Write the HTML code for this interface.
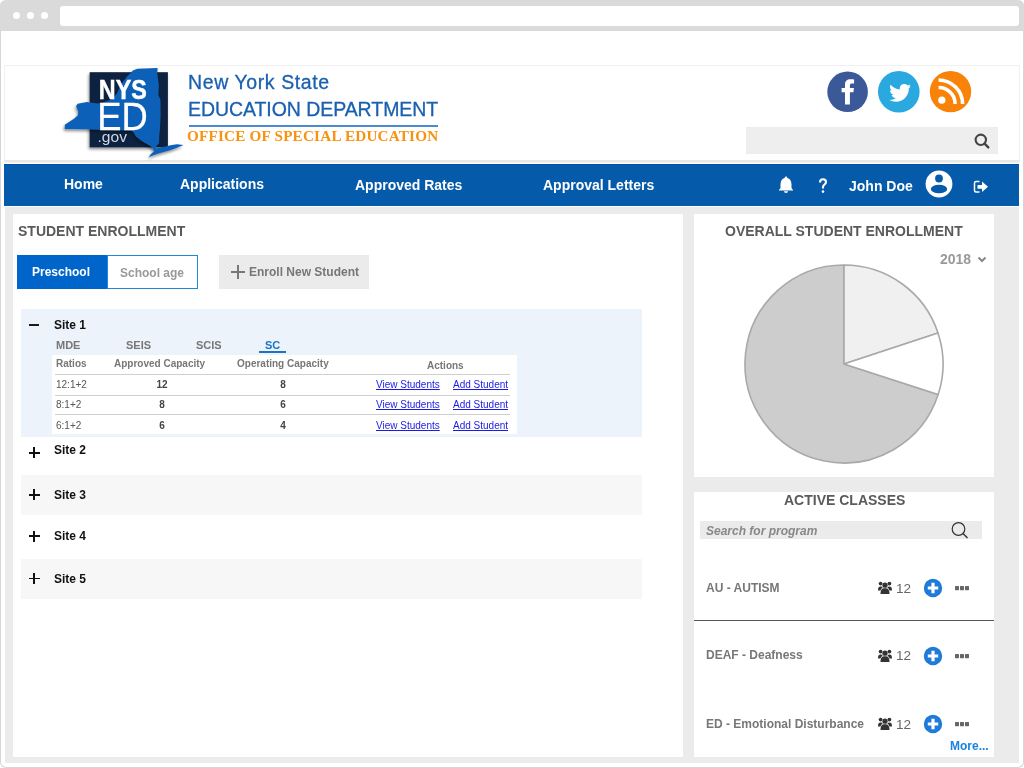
<!DOCTYPE html>
<html><head><meta charset="utf-8">
<style>
*{margin:0;padding:0;box-sizing:border-box}
html,body{width:1024px;height:768px;overflow:hidden;background:#fff;font-family:"Liberation Sans",sans-serif}
.t{will-change:transform}
.a{position:absolute}
.t{position:absolute;white-space:nowrap;line-height:1}
.b{font-weight:bold}
</style></head><body>
<!-- browser frame -->
<div class="a" style="left:0;top:0;width:1024px;height:768px;border:1px solid #d6d6d6;border-top:none;border-radius:6px"></div>
<div class="a" style="left:0;top:0;width:1024px;height:31px;background:#dadada;border-radius:6px 6px 0 0"></div>
<div class="a" style="left:12.5px;top:11.8px;width:7.6px;height:7.6px;border-radius:50%;background:#fff"></div>
<div class="a" style="left:26.6px;top:11.8px;width:7.6px;height:7.6px;border-radius:50%;background:#fff"></div>
<div class="a" style="left:40.7px;top:11.8px;width:7.6px;height:7.6px;border-radius:50%;background:#fff"></div>
<div class="a" style="left:59.5px;top:5.5px;width:959.5px;height:20px;border-radius:3px;background:#fff"></div>

<!-- header box -->
<div class="a" style="left:4px;top:65px;width:1016px;height:97px;border:1px solid #f0f0f0;border-bottom:2px solid #e6e6e6"></div>

<div class="a" style="left:4px;top:162px;width:1016px;height:1px;background:#f3f3f3"></div>
<!-- nav -->
<div class="a" style="left:4px;top:164px;width:1015px;height:42px;background:#065aaa;border-top:1px solid #0050a5"></div>
<div class="t b" style="left:64px;top:177px;font-size:14px;color:#fff">Home</div>
<div class="t b" style="left:180px;top:177px;font-size:14px;color:#fff">Applications</div>
<div class="t b" style="left:355px;top:178px;font-size:14px;color:#fff">Approved Rates</div>
<div class="t b" style="left:543px;top:178px;font-size:14px;color:#fff">Approval Letters</div>
<div class="t b" style="left:849px;top:179px;font-size:14px;color:#fff">John Doe</div>

<!-- gray content -->
<div class="a" style="left:5px;top:207px;width:1014px;height:556px;background:#ebebeb"></div>
<div class="a" style="left:13px;top:214px;width:670px;height:543px;background:#fff"></div>
<div class="a" style="left:694px;top:214px;width:300px;height:263px;background:#fff"></div>
<div class="a" style="left:694px;top:492px;width:300px;height:265px;background:#fff"></div>

<!-- left panel -->
<div class="t b" style="left:18px;top:224px;font-size:14px;color:#5a5a5a">STUDENT ENROLLMENT</div>


<div class="a" style="left:17px;top:255px;width:90px;height:34px;background:#0065cb"></div>
<div class="a" style="left:107px;top:255px;width:91px;height:34px;border:1px solid #2288d2;background:#fff"></div>
<div class="t b" style="left:31.5px;top:266px;font-size:12px;color:#fff">Preschool</div>
<div class="t b" style="left:119.5px;top:266.7px;font-size:12px;color:#999">School age</div>
<div class="a" style="left:219px;top:255px;width:150px;height:34px;background:#ebebeb"></div>
<div class="a" style="left:231px;top:271px;width:14px;height:2px;background:#777"></div>
<div class="a" style="left:237px;top:265px;width:2px;height:14px;background:#777"></div>
<div class="t b" style="left:249px;top:266px;font-size:12px;color:#777">Enroll New Student</div>

<!-- site 1 -->
<div class="a" style="left:21px;top:309px;width:621px;height:128px;background:#ecf3fb"></div>
<div class="a" style="left:29px;top:324.2px;width:10px;height:2.3px;background:#1a1a1a"></div>
<div class="t b" style="left:54px;top:319px;font-size:12px;color:#111">Site 1</div>
<div class="t b" style="left:56px;top:339.5px;font-size:11px;color:#777">MDE</div>
<div class="t b" style="left:126px;top:339.5px;font-size:11px;color:#777">SEIS</div>
<div class="t b" style="left:195.5px;top:339.5px;font-size:11px;color:#777">SCIS</div>
<div class="t b" style="left:265px;top:339.5px;font-size:11px;color:#1a73c8">SC</div>
<div class="a" style="left:259px;top:351px;width:27px;height:2px;background:#1a73c8"></div>
<div class="a" style="left:52px;top:355px;width:465px;height:79px;background:#fff"></div>
<div class="t b" style="left:56px;top:359px;font-size:10px;color:#777">Ratios</div>
<div class="t b" style="left:114px;top:359px;font-size:10px;color:#777">Approved Capacity</div>
<div class="t b" style="left:237px;top:359px;font-size:10px;color:#777">Operating Capacity</div>
<div class="t b" style="left:427px;top:360.5px;font-size:10px;color:#777">Actions</div>
<div class="a" style="left:55px;top:374px;width:455px;height:1px;background:#cfcfcf"></div>
<div class="a" style="left:55px;top:395px;width:455px;height:1px;background:#cfcfcf"></div>
<div class="a" style="left:55px;top:414px;width:455px;height:1px;background:#cfcfcf"></div>
<div class="t" style="left:56px;top:379.535px;font-size:10px;color:#555">12:1+2</div>
<div class="t b" style="left:112px;width:100px;text-align:center;top:379.535px;font-size:10px;color:#444">12</div>
<div class="t b" style="left:233px;width:100px;text-align:center;top:379.535px;font-size:10px;color:#444">8</div>
<div class="t" style="left:376px;top:379.535px;font-size:10px;color:#1a1ae6;text-decoration:underline">View Students</div>
<div class="t" style="left:453px;top:379.535px;font-size:10px;color:#1a1ae6;text-decoration:underline">Add Student</div>
<div class="t" style="left:56px;top:399.535px;font-size:10px;color:#555">8:1+2</div>
<div class="t b" style="left:112px;width:100px;text-align:center;top:399.535px;font-size:10px;color:#444">8</div>
<div class="t b" style="left:233px;width:100px;text-align:center;top:399.535px;font-size:10px;color:#444">6</div>
<div class="t" style="left:376px;top:399.535px;font-size:10px;color:#1a1ae6;text-decoration:underline">View Students</div>
<div class="t" style="left:453px;top:399.535px;font-size:10px;color:#1a1ae6;text-decoration:underline">Add Student</div>
<div class="t" style="left:56px;top:420.8px;font-size:10px;color:#555">6:1+2</div>
<div class="t b" style="left:112px;width:100px;text-align:center;top:420.8px;font-size:10px;color:#444">6</div>
<div class="t b" style="left:233px;width:100px;text-align:center;top:420.8px;font-size:10px;color:#444">4</div>
<div class="t" style="left:376px;top:420.8px;font-size:10px;color:#1a1ae6;text-decoration:underline">View Students</div>
<div class="t" style="left:453px;top:420.8px;font-size:10px;color:#1a1ae6;text-decoration:underline">Add Student</div>

<div class="a" style="left:21px;top:475px;width:621px;height:40px;background:#f7f7f7"></div>
<div class="a" style="left:21px;top:559px;width:621px;height:40px;background:#f7f7f7"></div>
<div class="t b" style="left:54px;top:443.942px;font-size:12px;color:#111">Site 2</div>
<div class="a" style="left:28.5px;top:452.05px;width:11px;height:1.5px;background:#111"></div>
<div class="a" style="left:33.25px;top:447.3px;width:1.5px;height:11px;background:#111"></div>
<div class="t b" style="left:54px;top:488.942px;font-size:12px;color:#111">Site 3</div>
<div class="a" style="left:28.5px;top:494.05px;width:11px;height:1.5px;background:#111"></div>
<div class="a" style="left:33.25px;top:489.3px;width:1.5px;height:11px;background:#111"></div>
<div class="t b" style="left:54px;top:529.942px;font-size:12px;color:#111">Site 4</div>
<div class="a" style="left:28.5px;top:535.45px;width:11px;height:1.5px;background:#111"></div>
<div class="a" style="left:33.25px;top:530.7px;width:1.5px;height:11px;background:#111"></div>
<div class="t b" style="left:54px;top:572.842px;font-size:12px;color:#111">Site 5</div>
<div class="a" style="left:28.5px;top:577.75px;width:11px;height:1.5px;background:#111"></div>
<div class="a" style="left:33.25px;top:573.0px;width:1.5px;height:11px;background:#111"></div>

<div class="t b" style="left:725px;top:224px;font-size:14px;color:#5a5a5a">OVERALL STUDENT ENROLLMENT</div>
<div class="t b" style="left:939.5px;top:252px;font-size:14px;color:#999">2018</div>
<svg class="a" style="left:975px;top:253.5px" width="14" height="10" viewBox="0 0 14 10"><path d="M3.5 3.5 L7 7 L10.5 3.5" fill="none" stroke="#888" stroke-width="2"/></svg>
<svg class="a" style="left:694px;top:214px" width="300" height="263" viewBox="694 214 300 263">
<g stroke="#aaa9a5" stroke-width="1.6" stroke-linejoin="round">
<path d="M844 364 L938.15 394.59 A99 99 0 1 1 844.00 265.00 Z" fill="#cdcdcd"/><path d="M844 364 L844.00 265.00 A99 99 0 0 1 937.99 332.91 Z" fill="#f0f0f0"/><path d="M844 364 L937.99 332.91 A99 99 0 0 1 938.15 394.59 Z" fill="#ffffff"/>
</g></svg>

<div class="t b" style="left:783.5px;top:492.8px;font-size:14px;color:#5a5a5a">ACTIVE CLASSES</div>
<div class="a" style="left:700px;top:521px;width:282px;height:18px;background:#ebebeb"></div>
<div class="t b" style="left:706px;top:524.7px;font-size:12px;font-style:italic;color:#888">Search for program</div>
<svg class="a" style="left:948px;top:519px" width="24" height="22" viewBox="0 0 24 22"><circle cx="10.5" cy="10" r="6.3" fill="none" stroke="#333" stroke-width="1.2"/><path d="M15 14.5 L19.5 19" stroke="#333" stroke-width="1.4"/></svg>
<div class="a" style="left:694px;top:620px;width:300px;height:1px;background:#555"></div>
<div class="t b" style="left:950px;top:739.7px;font-size:12px;color:#1a82e2">More...</div>
<div class="t b" style="left:706px;top:582.34px;font-size:12px;color:#777">AU - AUTISM</div>
<div class="t" style="left:895.5px;top:581.98px;font-size:13.5px;color:#666">12</div>
<svg class="a" style="left:877px;top:580.50px" width="16" height="14" viewBox="0 0 16 14"><circle cx="8" cy="4.2" r="2.6" fill="#333"/><circle cx="3.6" cy="2.6" r="1.9" fill="#333"/><circle cx="12.4" cy="2.6" r="1.9" fill="#333"/><path d="M3.5 13 C3.5 8.5 5 7.3 8 7.3 C11 7.3 12.5 8.5 12.5 13 Z" fill="#333"/><path d="M1 9.5 C1 6.5 2 5.6 3.6 5.6 C4.6 5.6 5.2 6 5.6 6.5 C4.4 7.4 3.7 8.4 3.5 9.5Z M15 9.5 C15 6.5 14 5.6 12.4 5.6 C11.4 5.6 10.8 6 10.4 6.5 C11.6 7.4 12.3 8.4 12.5 9.5Z" fill="#333"/></svg>
<svg class="a" style="left:923px;top:577.50px" width="20" height="20" viewBox="0 0 20 20"><circle cx="10" cy="10" r="9.2" fill="#1f7ad8"/><path d="M10 4.8 V15.2 M4.8 10 H15.2" stroke="#fff" stroke-width="3.2"/></svg>
<svg class="a" style="left:955px;top:585.50px" width="15" height="5" viewBox="0 0 15 5"><rect x="0" y="0" width="4" height="4.2" rx="0.6" fill="#666"/><rect x="5" y="0" width="4" height="4.2" rx="0.6" fill="#666"/><rect x="10" y="0" width="4" height="4.2" rx="0.6" fill="#666"/></svg>
<div class="t b" style="left:706px;top:648.94px;font-size:12px;color:#777">DEAF - Deafness</div>
<div class="t" style="left:895.5px;top:648.58px;font-size:13.5px;color:#666">12</div>
<svg class="a" style="left:877px;top:648.60px" width="16" height="14" viewBox="0 0 16 14"><circle cx="8" cy="4.2" r="2.6" fill="#333"/><circle cx="3.6" cy="2.6" r="1.9" fill="#333"/><circle cx="12.4" cy="2.6" r="1.9" fill="#333"/><path d="M3.5 13 C3.5 8.5 5 7.3 8 7.3 C11 7.3 12.5 8.5 12.5 13 Z" fill="#333"/><path d="M1 9.5 C1 6.5 2 5.6 3.6 5.6 C4.6 5.6 5.2 6 5.6 6.5 C4.4 7.4 3.7 8.4 3.5 9.5Z M15 9.5 C15 6.5 14 5.6 12.4 5.6 C11.4 5.6 10.8 6 10.4 6.5 C11.6 7.4 12.3 8.4 12.5 9.5Z" fill="#333"/></svg>
<svg class="a" style="left:923px;top:645.60px" width="20" height="20" viewBox="0 0 20 20"><circle cx="10" cy="10" r="9.2" fill="#1f7ad8"/><path d="M10 4.8 V15.2 M4.8 10 H15.2" stroke="#fff" stroke-width="3.2"/></svg>
<svg class="a" style="left:955px;top:653.60px" width="15" height="5" viewBox="0 0 15 5"><rect x="0" y="0" width="4" height="4.2" rx="0.6" fill="#666"/><rect x="5" y="0" width="4" height="4.2" rx="0.6" fill="#666"/><rect x="10" y="0" width="4" height="4.2" rx="0.6" fill="#666"/></svg>
<div class="t b" style="left:706px;top:718.24px;font-size:12px;color:#777">ED - Emotional Disturbance</div>
<div class="t" style="left:895.5px;top:717.88px;font-size:13.5px;color:#666">12</div>
<svg class="a" style="left:877px;top:716.90px" width="16" height="14" viewBox="0 0 16 14"><circle cx="8" cy="4.2" r="2.6" fill="#333"/><circle cx="3.6" cy="2.6" r="1.9" fill="#333"/><circle cx="12.4" cy="2.6" r="1.9" fill="#333"/><path d="M3.5 13 C3.5 8.5 5 7.3 8 7.3 C11 7.3 12.5 8.5 12.5 13 Z" fill="#333"/><path d="M1 9.5 C1 6.5 2 5.6 3.6 5.6 C4.6 5.6 5.2 6 5.6 6.5 C4.4 7.4 3.7 8.4 3.5 9.5Z M15 9.5 C15 6.5 14 5.6 12.4 5.6 C11.4 5.6 10.8 6 10.4 6.5 C11.6 7.4 12.3 8.4 12.5 9.5Z" fill="#333"/></svg>
<svg class="a" style="left:923px;top:713.90px" width="20" height="20" viewBox="0 0 20 20"><circle cx="10" cy="10" r="9.2" fill="#1f7ad8"/><path d="M10 4.8 V15.2 M4.8 10 H15.2" stroke="#fff" stroke-width="3.2"/></svg>
<svg class="a" style="left:955px;top:721.90px" width="15" height="5" viewBox="0 0 15 5"><rect x="0" y="0" width="4" height="4.2" rx="0.6" fill="#666"/><rect x="5" y="0" width="4" height="4.2" rx="0.6" fill="#666"/><rect x="10" y="0" width="4" height="4.2" rx="0.6" fill="#666"/></svg>

<!-- header content -->
<div class="a" style="left:746px;top:127px;width:252px;height:27px;background:#eeeeee"></div>
<svg class="a" style="left:970px;top:130px" width="22" height="22" viewBox="0 0 22 22"><circle cx="10.8" cy="9.8" r="5.2" fill="none" stroke="#444" stroke-width="2.1"/><path d="M14.6 13.6 L18.3 17.4" stroke="#444" stroke-width="2.4" stroke-linecap="round"/></svg>
<svg class="a" style="left:820px;top:64px" width="160" height="56" viewBox="820 64 160 56">
<circle cx="847.6" cy="91.8" r="20.3" fill="#3b5998"/>
<path d="M845 104.6 V92.3 H841.6 V88 H845 V84.8 C845 81.2 846.8 79.3 850.6 79.3 C852 79.3 853.3 79.4 854.1 79.5 V83.4 H851.9 C850.2 83.4 849.9 84.2 849.9 85.4 V88 H854 L853.4 92.3 H849.9 V104.6 Z" fill="#fff"/>
<circle cx="898.8" cy="91.8" r="20.8" fill="#2aa9e0"/>
<path transform="translate(1.5 1.5)" d="M909.3 84.6 C908.5 85 907.7 85.2 906.8 85.3 C907.7 84.8 908.4 83.9 908.7 82.9 C907.9 83.4 906.9 83.7 906 83.9 C905.2 83 904 82.5 902.7 82.5 C900.2 82.5 898.2 84.5 898.2 87 C898.2 87.4 898.2 87.7 898.3 88 C894.6 87.8 891.3 86 889.1 83.3 C888.7 84 888.5 84.7 888.5 85.6 C888.5 87.1 889.3 88.5 890.5 89.3 C889.8 89.3 889.1 89.1 888.5 88.8 C888.5 91 890.1 92.9 892.1 93.3 C891.7 93.4 891.3 93.5 890.9 93.5 C890.6 93.5 890.3 93.5 890.1 93.4 C890.7 95.2 892.3 96.5 894.3 96.5 C892.8 97.7 890.8 98.4 888.7 98.4 C888.3 98.4 888 98.4 887.6 98.3 C889.6 99.6 892 100.3 894.6 100.3 C902.8 100.3 907.3 93.5 907.3 87.6 V87 C908.1 86.4 908.8 85.6 909.3 84.6 Z" fill="#fff"/>
<circle cx="950.5" cy="91.6" r="20.7" fill="#f98209"/>
<circle cx="941.8" cy="100.2" r="3.6" fill="#fff"/>
<path d="M938.6 87.5 A 16.5 16.5 0 0 1 955.1 104" fill="none" stroke="#fff" stroke-width="3.6"/>
<path d="M938.6 80 A 24 24 0 0 1 962.6 104" fill="none" stroke="#fff" stroke-width="3.6"/>
</svg>

<div class="t" style="left:188px;top:73.3px;font-size:19.5px;color:#1a60b0;letter-spacing:0.6px;-webkit-text-stroke:0.3px #1a60b0">New York State</div>
<div class="t" style="left:188px;top:100.1px;font-size:19.5px;color:#1a60b0;letter-spacing:-0.06px;-webkit-text-stroke:0.3px #1a60b0">EDUCATION DEPARTMENT</div>
<div class="a" style="left:189px;top:125px;width:249px;height:2px;background:#4a8ad0"></div>
<div class="t" style="left:187px;top:128.4px;font-size:15.2px;color:#f7930f;font-family:'Liberation Serif',serif;font-weight:bold;letter-spacing:0.2px">OFFICE OF SPECIAL EDUCATION</div>

<!-- logo -->
<svg class="a" style="left:55px;top:62px" width="135" height="100" viewBox="55 62 135 100">
<defs><filter id="sh" x="-20%" y="-20%" width="140%" height="140%"><feGaussianBlur in="SourceAlpha" stdDeviation="1.5"/><feOffset dx="-1.5" dy="2" result="o"/><feComponentTransfer><feFuncA type="linear" slope="0.45"/></feComponentTransfer><feMerge><feMergeNode/><feMergeNode in="SourceGraphic"/></feMerge></filter></defs>
<g filter="url(#sh)">
<rect x="89.7" y="72.2" width="78.2" height="75.1" fill="#0c2340"/>
</g>
<g filter="url(#sh)">
<path d="M64.8 124.7 L69.7 121.5 L74 118.8 L77.7 115.6 L78.3 111.8 L77.2 109.1 L76.1 105.9 L77.7 103.7 L86.9 102.1 L97.6 103.4 L103 102.7 L111.6 99.4 L117 93.5 L119.6 87.6 L123.4 81.2 L126.6 76.9 L133 70.4 L137.3 68.8 L157.7 68.1 L157.2 72.6 L158.8 85.5 L158.3 95.1 L160.4 99.4 L160.6 115 L160 128 L159.2 136 L159 143.2 L156.4 146.1 L155.8 148.4 L164 146.8 L172 145 L177 144.3 L183.6 145 L180 146.5 L171 150 L162 152.6 L154.6 154.8 L148.7 157.2 L151 154 L154 151.4 L152.4 147.2 L147 144 L142.2 141.3 L135.9 136.5 L133.8 132.5 L131.75 130.4 L110 129.9 L85 129.3 L64.8 129 Z" fill="#1160b8"/>
</g>
<text x="98.8" y="98.6" font-family="Liberation Sans" font-weight="bold" font-size="27.5" fill="#fff" stroke="#fff" stroke-width="0.5" textLength="48" lengthAdjust="spacingAndGlyphs">NYS</text>
<text x="97.3" y="130.4" font-family="Liberation Sans" font-size="38.5" fill="#fff" stroke="#fff" stroke-width="0.3" textLength="50.5" lengthAdjust="spacingAndGlyphs">ED</text>
<text x="97.5" y="141.9" font-family="Liberation Sans" font-size="15" fill="#cfd6df" textLength="29.5" lengthAdjust="spacingAndGlyphs">.gov</text>
</svg>

<!-- nav icons -->
<svg class="a" style="left:776px;top:174px" width="20" height="22" viewBox="0 0 20 22"><path d="M10 2.5 C10.8 2.5 11.3 3.1 11.3 3.9 C14.2 4.6 15.5 7 15.5 10.5 V13.5 C15.5 14.5 16.2 15.2 17 15.8 V16.5 H3 V15.8 C3.8 15.2 4.5 14.5 4.5 13.5 V10.5 C4.5 7 5.8 4.6 8.7 3.9 C8.7 3.1 9.2 2.5 10 2.5 Z M8 17.3 H12 C12 18.5 11.1 19 10 19 C8.9 19 8 18.5 8 17.3 Z" fill="#fff"/></svg>
<svg class="a" style="left:818px;top:178px" width="10" height="16" viewBox="0 0 10 16"><path d="M2 4.4 C2 2.4 3.3 1.2 5 1.2 C6.9 1.2 8 2.4 8 3.9 C8 5.3 7.2 6 6.2 6.8 C5.3 7.5 5 8 5 9.2 V10.6" fill="none" stroke="#fff" stroke-width="2.1"/><circle cx="5" cy="13.6" r="1.3" fill="#fff"/></svg>
<svg class="a" style="left:924px;top:169px" width="30" height="30" viewBox="0 0 30 30"><circle cx="15" cy="15" r="13.4" fill="#fff"/><circle cx="15" cy="9.5" r="3.9" fill="#065aaa"/><ellipse cx="15" cy="20" rx="8.2" ry="4.3" fill="#065aaa"/></svg>
<svg class="a" style="left:972px;top:178px" width="20" height="18" viewBox="0 0 20 18"><path d="M7.5 3.5 H4 C3 3.5 2.5 4 2.5 5 V12.5 C2.5 13.5 3 14 4 14 H7.5" fill="none" stroke="#fff" stroke-width="1.5"/><path d="M5.5 7 H10 V3.6 L16 8.8 L10 14 V10.7 H5.5 Z" fill="#fff"/></svg>
</body></html>
